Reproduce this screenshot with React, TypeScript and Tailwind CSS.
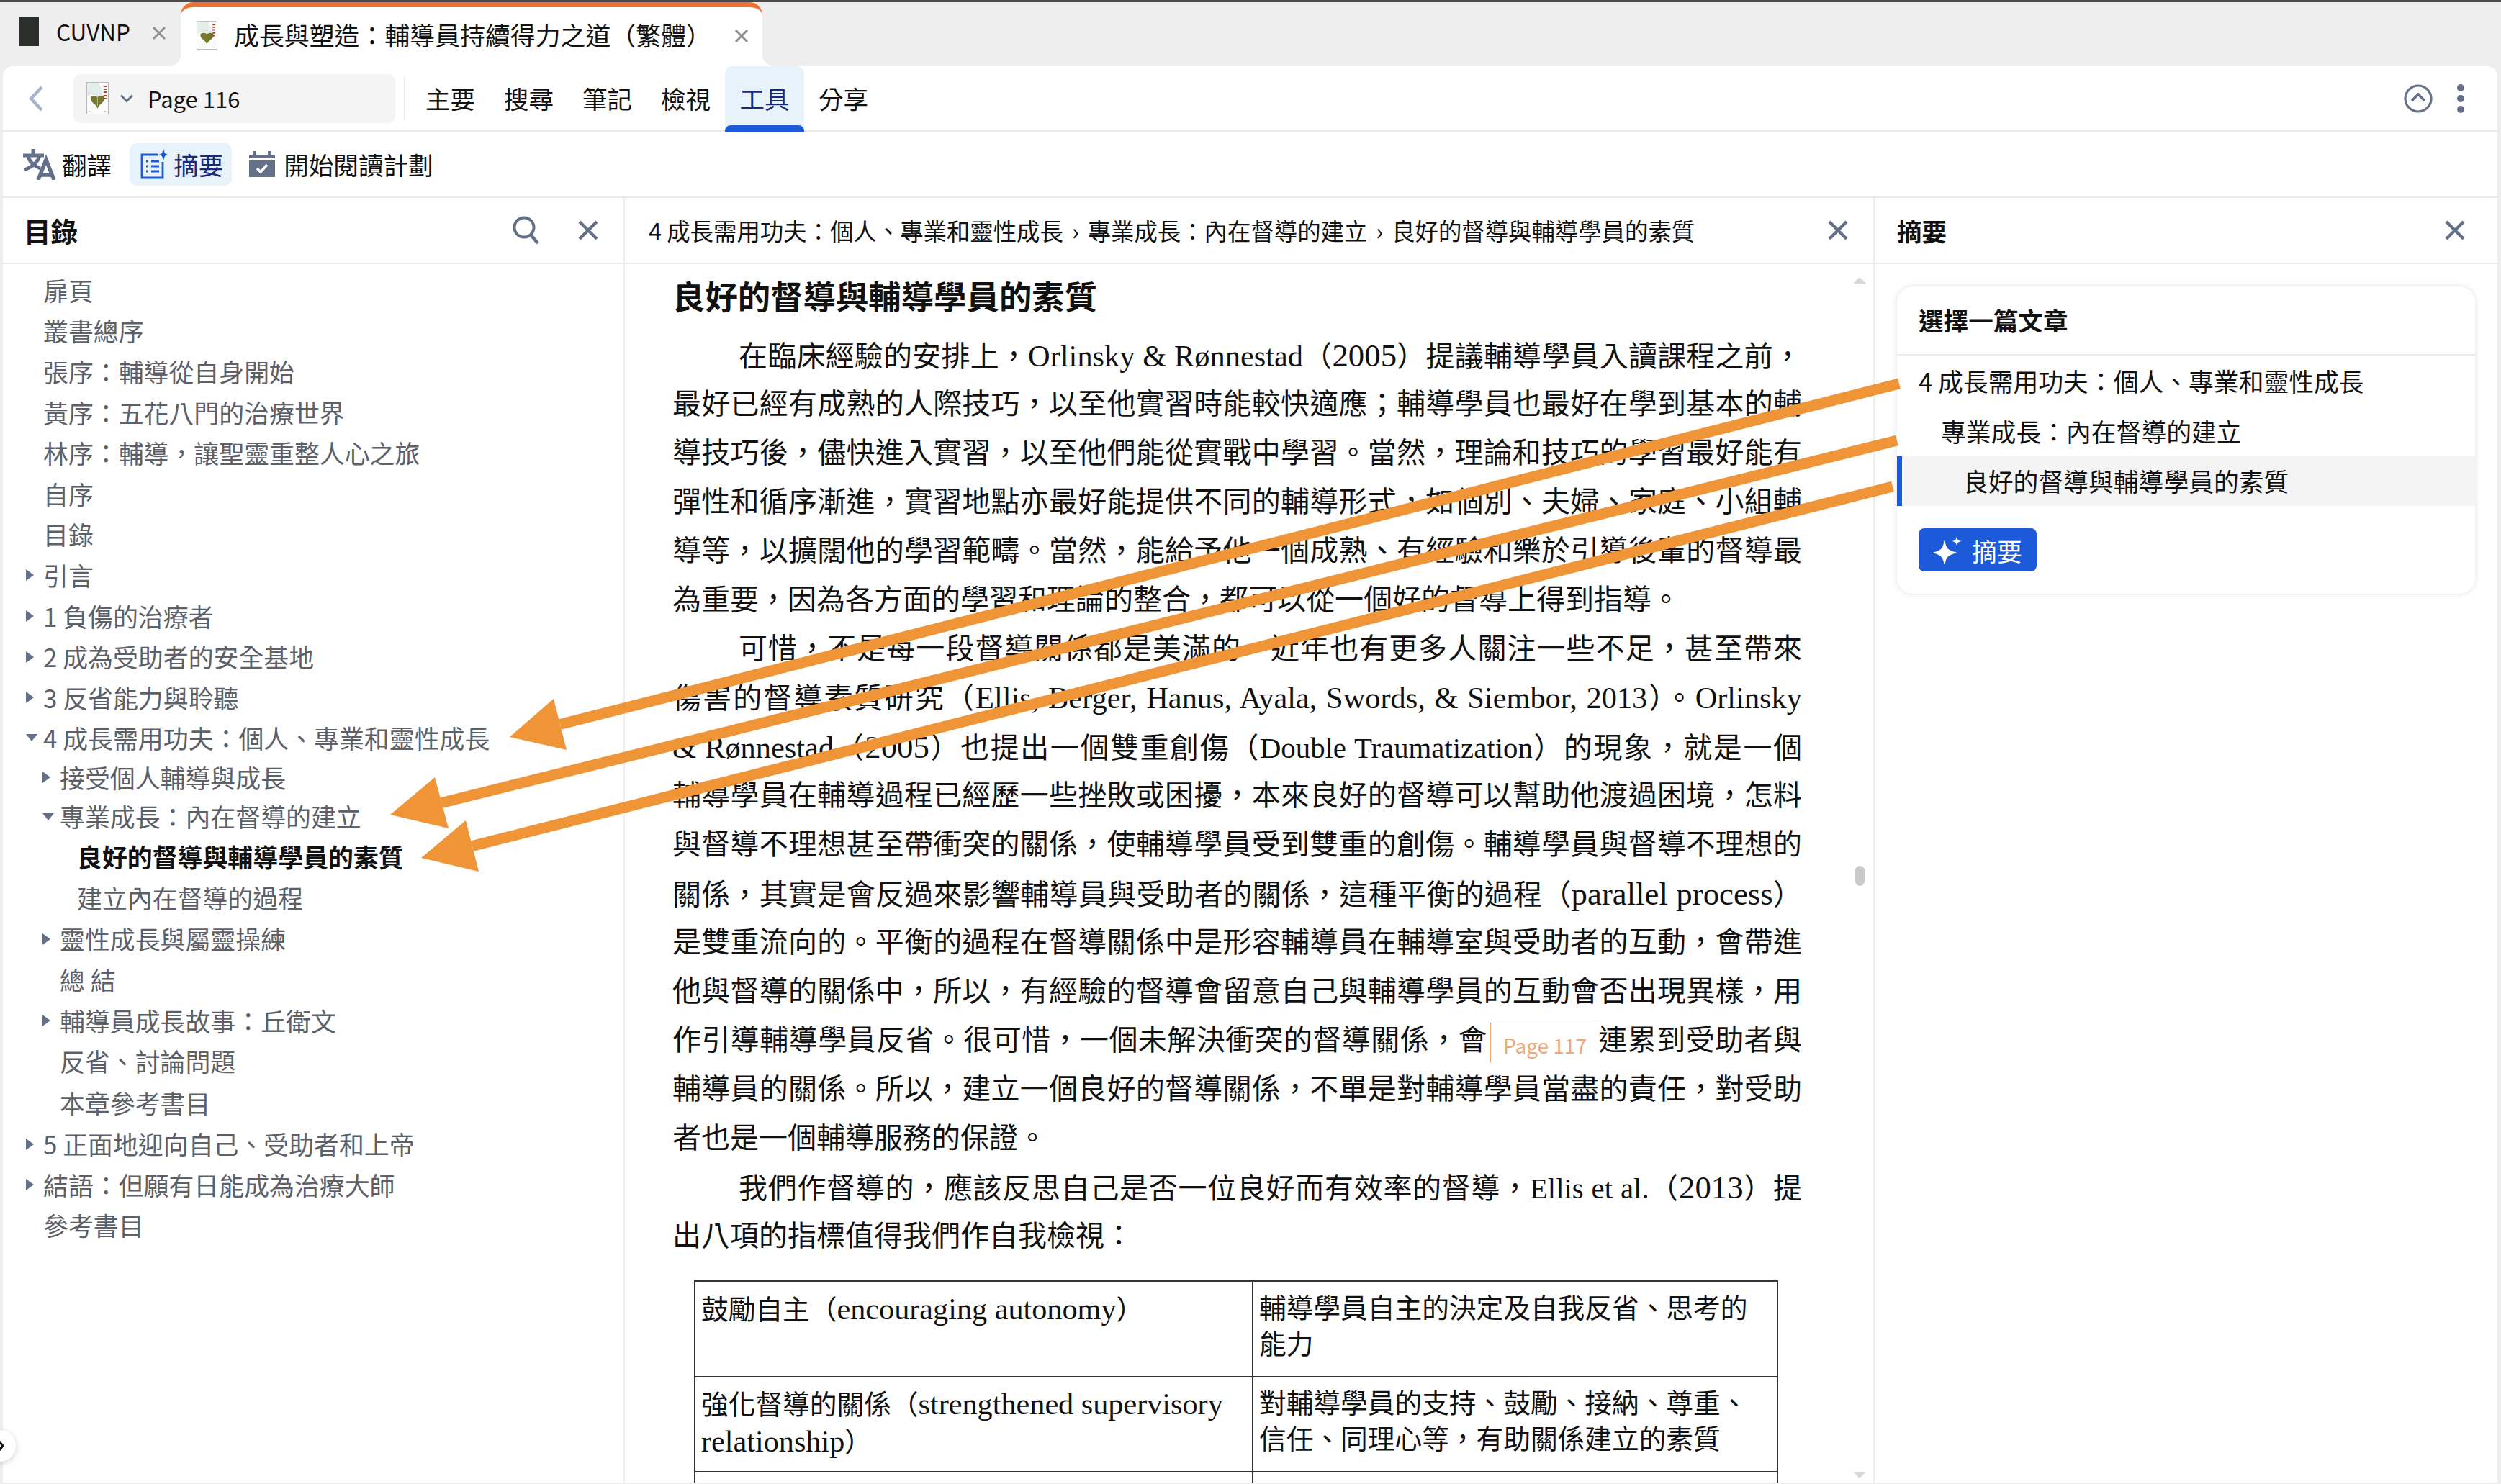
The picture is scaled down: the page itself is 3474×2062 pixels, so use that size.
import React from "react";

const SANS = '"Noto Sans CJK TC", "Noto Sans", sans-serif';
const SERIF = '"Liberation Serif", "Noto Sans CJK TC", serif';

function BookThumb({ className }: { className: string }) {
  return (
    <svg viewBox="0 0 30 45" className={className} preserveAspectRatio="none">
      <rect x="0.5" y="0.5" width="29" height="44" fill="#fbfcfa" stroke="#b9b9b9" strokeWidth="1" />
      <path d="M1 1H16C21 8 22 16 21 23C14 18 7 16 1 20Z" fill="#e4eee8" />
      <path d="M15 37C14 34 13 32 10 30C6 27 5 23 6 20C10 18 13 19 15 21C17 19 20 18 24 20C25 23 24 27 20 30C17 32 16 34 15 37Z" fill="#77772f" />
      <path d="M15 21V33" stroke="#c6c98a" strokeWidth="0.8" />
      <path d="M23 6h4M23 10h4M23 14h4M23 19h4M23 23h4" stroke="#a8423f" strokeWidth="2.2" />
      <path d="M3 41h2M24 41h2" stroke="#888888" strokeWidth="1.2" />
    </svg>
  );
}

function XIcon({ className }: { className: string }) {
  return (
    <svg viewBox="0 0 30 30" className={className}>
      <path d="M3 3L27 27M27 3L3 27" stroke="currentColor" strokeWidth="4.4" fill="none" />
    </svg>
  );
}

type Row = { t: string; lv: 0 | 1 | 2; a?: "r" | "d"; cur?: boolean; h: string };

const toc: Row[] = [
  { t: "扉頁", lv: 0, h: "h-[56.6px]" },
  { t: "叢書總序", lv: 0, h: "h-[56.6px]" },
  { t: "張序：輔導從自身開始", lv: 0, h: "h-[56.6px]" },
  { t: "黃序：五花八門的治療世界", lv: 0, h: "h-[56.6px]" },
  { t: "林序：輔導，讓聖靈重整人心之旅", lv: 0, h: "h-[56.6px]" },
  { t: "自序", lv: 0, h: "h-[56.6px]" },
  { t: "目錄", lv: 0, h: "h-[56.6px]" },
  { t: "引言", lv: 0, a: "r", h: "h-[56.6px]" },
  { t: "1 負傷的治療者", lv: 0, a: "r", h: "h-[56.6px]" },
  { t: "2 成為受助者的安全基地", lv: 0, a: "r", h: "h-[56.6px]" },
  { t: "3 反省能力與聆聽", lv: 0, a: "r", h: "h-[56.6px]" },
  { t: "4 成長需用功夫：個人、專業和靈性成長", lv: 0, a: "d", h: "h-[55px]" },
  { t: "接受個人輔導與成長", lv: 1, a: "r", h: "h-[55px]" },
  { t: "專業成長：內在督導的建立", lv: 1, a: "d", h: "h-[54px]" },
  { t: "良好的督導與輔導學員的素質", lv: 2, cur: true, h: "h-[57px]" },
  { t: "建立內在督導的過程", lv: 2, h: "h-[58px]" },
  { t: "靈性成長與屬靈操練", lv: 1, a: "r", h: "h-[56.6px]" },
  { t: "總 結", lv: 1, h: "h-[56.6px]" },
  { t: "輔導員成長故事：丘衛文", lv: 1, a: "r", h: "h-[56.6px]" },
  { t: "反省、討論問題", lv: 1, h: "h-[56.6px]" },
  { t: "本章參考書目", lv: 1, h: "h-[58.5px]" },
  { t: "5 正面地迎向自己、受助者和上帝", lv: 0, a: "r", h: "h-[56.6px]" },
  { t: "結語：但願有日能成為治療大師", lv: 0, a: "r", h: "h-[56.6px]" },
  { t: "參考書目", lv: 0, h: "h-[56.6px]" },
];

function TocRow({ r }: { r: Row }) {
  const pad = r.lv === 0 ? "pl-[56px]" : r.lv === 1 ? "pl-[79px]" : "pl-[103px]";
  const arrowPos = r.lv === 0 ? "left-[32px]" : "left-[55px]";
  return (
    <div className={`relative flex items-center ${r.h} ${pad} text-[34.9px] leading-none whitespace-nowrap ${r.cur ? "font-bold text-[#111111]" : "text-[#5c6068]"}`}>
      {r.a === "r" && <span className={`absolute ${arrowPos} top-1/2 -translate-y-1/2 w-0 h-0 border-y-[8.5px] border-y-transparent border-l-[11px] border-l-[#64708a]`} />}
      {r.a === "d" && <span className={`absolute ${arrowPos} top-1/2 -translate-y-1/2 w-0 h-0 border-x-[8px] border-x-transparent border-t-[10px] border-t-[#64708a]`} />}
      <span>{r.t}</span>
    </div>
  );
}

const just = "[text-align:justify] [text-align-last:justify] whitespace-nowrap";

function L({ children, indent, free }: { children: React.ReactNode; indent?: boolean; free?: boolean }) {
  return (
    <div className={`h-[68px] leading-[68px] ${indent ? "pl-[92px]" : ""} ${free ? "whitespace-nowrap" : just}`}>
      {children}
    </div>
  );
}

function E({ children }: { children: React.ReactNode }) {
  return <span className="text-[1.12em]">{children}</span>;
}
function M({ children }: { children: React.ReactNode }) {
  return <span className="text-[1.06em]">{children}</span>;
}
function N({ children }: { children: React.ReactNode }) {
  return <span className="text-[1.02em]">{children}</span>;
}

function Arrow({ tip, a, b, end }: { tip: [number, number]; a: [number, number]; b: [number, number]; end: [number, number] }) {
  const mid: [number, number] = [(a[0] + b[0]) / 2, (a[1] + b[1]) / 2];
  return (
    <>
      <line x1={end[0]} y1={end[1]} x2={mid[0]} y2={mid[1]} stroke="#f09537" strokeWidth="15" />
      <polygon points={`${tip[0]},${tip[1]} ${a[0]},${a[1]} ${b[0]},${b[1]}`} fill="#f09537" />
    </>
  );
}

export default function App() {
  return (
    <div className="relative flex h-screen w-full flex-col overflow-hidden bg-[#eeeeee] text-[#111111]" style={{ fontFamily: SANS }}>
      {/* tab strip */}
      <div className="flex h-[92px] shrink-0 border-t-[3px] border-[#4a4a4a]">
        <div className="flex w-[251px] items-center pb-[8px] pl-[26px]">
          <div className="h-[40px] w-[28px] bg-[#2b302c]" />
          <span className="ml-[24px] text-[31.5px] leading-none">CUVNP</span>
          <XIcon className="ml-[30px] mt-[5px] h-[20px] w-[20px] text-[#8f8f8f]" />
        </div>
        <div className="relative flex w-[808px] items-center rounded-t-[18px] border-t-[7px] border-[#ee7130] bg-white pb-[5px] pl-[22px]">
          <BookThumb className="h-[40px] w-[29px]" />
          <span className="ml-[23px] whitespace-nowrap text-[34.9px] leading-none">成長與塑造：輔導員持續得力之道（繁體）</span>
          <XIcon className="absolute left-[769px] top-[30px] h-[20px] w-[20px] text-[#8f8f8f]" />
          <span className="absolute -left-[16px] bottom-0 h-[16px] w-[16px] bg-white">
            <span className="block h-full w-full rounded-br-[16px] bg-[#eeeeee]" />
          </span>
          <span className="absolute -right-[16px] bottom-0 h-[16px] w-[16px] bg-white">
            <span className="block h-full w-full rounded-bl-[16px] bg-[#eeeeee]" />
          </span>
        </div>
      </div>

      {/* app card */}
      <div className="ml-[4px] mr-[5px] mb-[2px] flex min-h-0 flex-1 flex-col rounded-t-[14px] bg-white">
        {/* nav row */}
        <div className="relative flex h-[91px] shrink-0 items-center border-b-2 border-[#ebebeb]">
          <svg viewBox="0 0 20 36" className="ml-[36px] h-[36px] w-[20px] text-[#a9b4c9]">
            <path d="M18 2L3 18L18 34" stroke="currentColor" strokeWidth="4.4" fill="none" />
          </svg>
          <div className="ml-[42px] flex h-[68px] w-[447px] items-center rounded-[10px] bg-[#f4f4f4] pl-[18px]">
            <BookThumb className="h-[45px] w-[31px]" />
            <svg viewBox="0 0 18 10" className="ml-[16px] h-[11px] w-[18px] text-[#64708a]">
              <path d="M1 1L9 9L17 1" stroke="currentColor" strokeWidth="3" fill="none" />
            </svg>
            <span className="ml-[20px] text-[31px] leading-none">Page 116</span>
          </div>
          <div className="ml-[12px] h-[60px] w-[2px] bg-[#ebebeb]" />
          <div className="ml-[8px] flex h-full text-[34.6px] leading-none">
            {["主要", "搜尋", "筆記", "檢視", "工具", "分享"].map((t) =>
              t === "工具" ? (
                <div key={t} className="relative flex w-[110px] items-center justify-center rounded-t-[10px] bg-[#e8f2fb] text-[#1b2a78]">
                  {t}
                  <span className="absolute inset-x-0 -bottom-[2px] h-[9px] rounded-t-[8px] bg-[#1d5ad9]" />
                </div>
              ) : (
                <div key={t} className="flex w-[109px] items-center justify-center">{t}</div>
              )
            )}
          </div>
          <div className="ml-auto mr-[46px] flex items-center gap-[34px]">
            <svg viewBox="0 0 40 40" className="h-[40px] w-[40px] text-[#64708a]">
              <circle cx="20" cy="20" r="18" stroke="currentColor" strokeWidth="3.2" fill="none" />
              <path d="M11 23L20 14L29 23" stroke="currentColor" strokeWidth="3.6" fill="none" />
            </svg>
            <div className="flex flex-col gap-[5px]">
              <span className="h-[10px] w-[10px] rounded-full bg-[#64708a]" />
              <span className="h-[10px] w-[10px] rounded-full bg-[#64708a]" />
              <span className="h-[10px] w-[10px] rounded-full bg-[#64708a]" />
            </div>
          </div>
        </div>

        {/* tool row */}
        <div className="flex h-[92px] shrink-0 items-center border-b-2 border-[#ebebeb] text-[34.6px] leading-none">
          <svg viewBox="0 0 45 43" className="ml-[28px] h-[43px] w-[45px] text-[#64708a]">
            <path d="M0 9H29M14 0V9M23 9C21 18 12 25 2 29M7 11C10 19 16 24 24 27" stroke="currentColor" strokeWidth="5" fill="none" />
            <path d="M21 43L32 15L43 43M25 36H39" stroke="currentColor" strokeWidth="5.4" fill="none" />
          </svg>
          <span className="ml-[9px]">翻譯</span>
          <div className="ml-[25px] flex h-[59px] w-[142px] items-center rounded-[10px] bg-[#e8f2fb] pl-[15px] text-[#1b2a78]">
            <svg viewBox="0 0 38 42" className="h-[42px] w-[38px] text-[#1d5ad9]">
              <path d="M25 8H2V40H31V18" stroke="currentColor" strokeWidth="2.8" fill="none" />
              <path d="M8 17h3M15 17h11M8 24h3M15 24h11M8 31h3M15 31h11" stroke="currentColor" strokeWidth="2.8" />
              <path d="M32 0L34 6L38 8L34 10L32 16L30 10L26 8L30 6Z" fill="currentColor" />
            </svg>
            <span className="ml-[8px]">摘要</span>
          </div>
          <svg viewBox="0 0 36 36" className="ml-[24px] h-[36px] w-[36px]">
            <path d="M0 13H36V36H0Z M0 5H36V10H0Z M6 0H10V5H6Z M26 0H30V5H26Z" fill="#64708a" />
            <path d="M11 24L16 29L25 19" stroke="#ffffff" strokeWidth="3.6" fill="none" />
          </svg>
          <span className="ml-[12px]">開始閱讀計劃</span>
        </div>

        {/* panels */}
        <div className="flex min-h-0 flex-1">
          {/* TOC */}
          <div className="flex w-[864px] shrink-0 flex-col border-r-2 border-[#eeeeee]">
            <div className="flex h-[92px] shrink-0 items-center border-b-2 border-[#ebebeb]">
              <span className="ml-[29px] text-[37.5px] font-bold leading-none">目錄</span>
              <svg viewBox="0 0 38 40" className="ml-auto h-[40px] w-[38px] text-[#64708a]">
                <circle cx="16" cy="16" r="13.5" stroke="currentColor" strokeWidth="4" fill="none" />
                <path d="M25 26L35 38" stroke="currentColor" strokeWidth="4.4" />
              </svg>
              <XIcon className="ml-[52px] mr-[34px] h-[30px] w-[30px] text-[#64708a]" />
            </div>
            <div className="min-h-0 flex-1 overflow-hidden pt-[8px]">
              {toc.map((r) => (
                <TocRow key={r.t} r={r} />
              ))}
            </div>
          </div>

          {/* reader */}
          <div className="relative flex w-[1736px] shrink-0 flex-col border-r-2 border-[#eeeeee]">
            <div className="flex h-[92px] shrink-0 items-center border-b-2 border-[#ebebeb] pl-[33px]">
              <span className="whitespace-nowrap text-[32.4px] leading-none">
                4 成長需用功夫：個人、專業和靈性成長<span className="mx-[12px]">›</span>專業成長：內在督導的建立<span className="mx-[12px]">›</span>良好的督導與輔導學員的素質
              </span>
              <XIcon className="ml-auto mr-[34px] h-[30px] w-[30px] text-[#64708a]" />
            </div>
            <div className="min-h-0 flex-1 overflow-hidden pl-[66px] pr-[99px]">
              <div className="mt-[13px] h-[60px] text-[45.4px] font-bold leading-[60px]">良好的督導與輔導學員的素質</div>
              <div className="mt-[20px] text-[40px] text-[#111111]" style={{ fontFamily: SERIF }}>
                <L indent>在臨床經驗的安排上，<M>Orlinsky &amp; Rønnestad</M>（<E>2005</E>）提議輔導學員入讀課程之前，</L>
                <L>最好已經有成熟的人際技巧，以至他實習時能較快適應；輔導學員也最好在學到基本的輔</L>
                <L>導技巧後，儘快進入實習，以至他們能從實戰中學習。當然，理論和技巧的學習最好能有</L>
                <L>彈性和循序漸進，實習地點亦最好能提供不同的輔導形式，如個別、夫婦、家庭、小組輔</L>
                <L>導等，以擴闊他的學習範疇。當然，能給予他一個成熟、有經驗和樂於引導後輩的督導最</L>
                <L free>為重要，因為各方面的學習和理論的整合，都可以從一個好的督導上得到指導。</L>
                <L indent>可惜，不是每一段督導關係都是美滿的，近年也有更多人關注一些不足，甚至帶來</L>
                <L>傷害的督導素質研究（<M>Ellis, Berger, Hanus, Ayala, Swords, &amp; Siembor, 2013</M>）。<M>Orlinsky</M></L>
                <L><M>&amp; Rønnestad</M>（<E>2005</E>）也提出一個雙重創傷（<N>Double Traumatization</N>）的現象，就是一個</L>
                <L>輔導學員在輔導過程已經歷一些挫敗或困擾，本來良好的督導可以幫助他渡過困境，怎料</L>
                <L>與督導不理想甚至帶衝突的關係，使輔導學員受到雙重的創傷。輔導學員與督導不理想的</L>
                <L>關係，其實是會反過來影響輔導員與受助者的關係，這種平衡的過程（<E>parallel process</E>）</L>
                <L>是雙重流向的。平衡的過程在督導關係中是形容輔導員在輔導室與受助者的互動，會帶進</L>
                <L>他與督導的關係中，所以，有經驗的督導會留意自己與輔導學員的互動會否出現異樣，用</L>
                <L>
                  作引導輔導學員反省。很可惜，一個未解決衝突的督導關係，會
                  <span className="ml-[4px] mt-[9px] inline-block h-[56px] w-[150px] border-l border-t border-[#efa76f] pl-[17px] align-top text-[28px] leading-[60px] text-[#f2a874] [text-align-last:left]" style={{ fontFamily: SANS }}>
                    Page 117
                  </span>
                  連累到受助者與
                </L>
                <L>輔導員的關係。所以，建立一個良好的督導關係，不單是對輔導學員當盡的責任，對受助</L>
                <L free>者也是一個輔導服務的保證。</L>
                <L indent>我們作督導的，應該反思自己是否一位良好而有效率的督導，<N>Ellis et al.</N>（<E>2013</E>）提</L>
                <L free>出八項的指標值得我們作自我檢視：</L>
                <table className="ml-[30px] mt-[27px] w-[1504px] table-fixed border-collapse text-[37.7px] leading-[49.5px]">
                  <colgroup>
                    <col className="w-[775px]" />
                    <col className="w-[729px]" />
                  </colgroup>
                  <tbody>
                    <tr className="h-[133px]">
                      <td className="border-2 border-[#333333] px-[8px] pb-[18px] pt-[13px] align-top">鼓勵自主（<E>encouraging autonomy</E>）</td>
                      <td className="border-2 border-[#333333] px-[8px] pb-[18px] pt-[13px] align-top">輔導學員自主的決定及自我反省、思考的能力</td>
                    </tr>
                    <tr className="h-[132px]">
                      <td className="border-2 border-[#333333] px-[8px] pb-[12px] pt-[12px] align-top">強化督導的關係（<E>strengthened supervisory relationship</E>）</td>
                      <td className="border-2 border-[#333333] px-[8px] pb-[12px] pt-[12px] align-top">對輔導學員的支持、鼓勵、接納、尊重、信任、同理心等，有助關係建立的素質</td>
                    </tr>
                    <tr className="h-[60px]">
                      <td className="border-2 border-[#333333]" />
                      <td className="border-2 border-[#333333]" />
                    </tr>
                  </tbody>
                </table>
              </div>
            </div>
            {/* scrollbar */}
            <span className="absolute right-[10px] top-[110px] h-0 w-0 border-x-[9px] border-b-[9px] border-x-transparent border-b-[#d8d8d8]" />
            <span className="absolute right-[12px] top-[928px] h-[28px] w-[13px] rounded-full bg-[#cacaca]" />
            <span className="absolute bottom-[6px] right-[10px] h-0 w-0 border-x-[9px] border-t-[9px] border-x-transparent border-t-[#d8d8d8]" />
          </div>

          {/* summary */}
          <div className="flex min-w-0 flex-1 flex-col">
            <div className="flex h-[92px] shrink-0 items-center border-b-2 border-[#ebebeb]">
              <span className="ml-[31px] text-[34.6px] font-bold leading-none">摘要</span>
              <XIcon className="ml-auto mr-[44px] h-[30px] w-[30px] text-[#64708a]" />
            </div>
            <div className="px-[31px] pt-[31px]">
              <div className="h-[427px] w-[803px] overflow-hidden rounded-[22px] bg-white shadow-[0_0_8px_rgba(0,0,0,0.12)]">
                <div className="flex h-[96px] items-center border-b-2 border-[#ebebeb] pb-[2px] pl-[30px] text-[34.6px] font-bold leading-none">選擇一篇文章</div>
                <div className="text-[34.8px] leading-none">
                  <div className="flex h-[70px] items-center pl-[30px]">4 成長需用功夫：個人、專業和靈性成長</div>
                  <div className="flex h-[70px] items-center pl-[61px]">專業成長：內在督導的建立</div>
                  <div className="flex h-[69px] items-center border-l-[7px] border-[#1d5ad9] bg-[#f4f4f4] pl-[85px]">良好的督導與輔導學員的素質</div>
                </div>
                <div className="pl-[30px] pt-[31px]">
                  <div className="flex h-[60px] w-[164px] items-center rounded-[8px] bg-[#1d5ad9] pl-[21px] text-[35px] leading-none text-white">
                    <svg viewBox="0 0 40 40" className="h-[40px] w-[40px]">
                      <path d="M15 8C16 18 20 22 31 24C20 26 16 30 15 40C14 30 10 26 0 24C10 22 14 18 15 8Z" fill="#ffffff" stroke="#ffffff" strokeWidth="1.5" strokeLinejoin="round" />
                      <path d="M32 1C32.6 6 34 7.4 39 8C34 8.6 32.6 10 32 15C31.4 10 30 8.6 25 8C30 7.4 31.4 6 32 1Z" fill="#ffffff" />
                    </svg>
                    <span className="ml-[13px]">摘要</span>
                  </div>
                </div>
              </div>
            </div>
          </div>
        </div>
      </div>

      {/* collapse handle */}
      <div className="absolute -left-[22px] top-[1987px] flex h-[44px] w-[44px] items-center justify-end rounded-full bg-white shadow-[0_2px_8px_rgba(0,0,0,0.18)]">
        <svg viewBox="0 0 8 14" className="absolute left-[20px] h-[14px] w-[8px]">
          <path d="M1 1L6 7L1 13" stroke="#111111" strokeWidth="3.2" fill="none" />
        </svg>
      </div>

      {/* annotation arrows */}
      <svg className="pointer-events-none absolute left-0 top-0 h-[2062px] w-[3474px]" viewBox="0 0 3474 2062">
        <Arrow end={[2638, 533]} tip={[708, 1024]} a={[769, 971]} b={[787, 1042]} />
        <Arrow end={[2635, 612]} tip={[542, 1132]} a={[604, 1080]} b={[623, 1151]} />
        <Arrow end={[2629, 676]} tip={[585, 1192]} a={[647, 1140]} b={[665, 1211]} />
      </svg>
    </div>
  );
}
